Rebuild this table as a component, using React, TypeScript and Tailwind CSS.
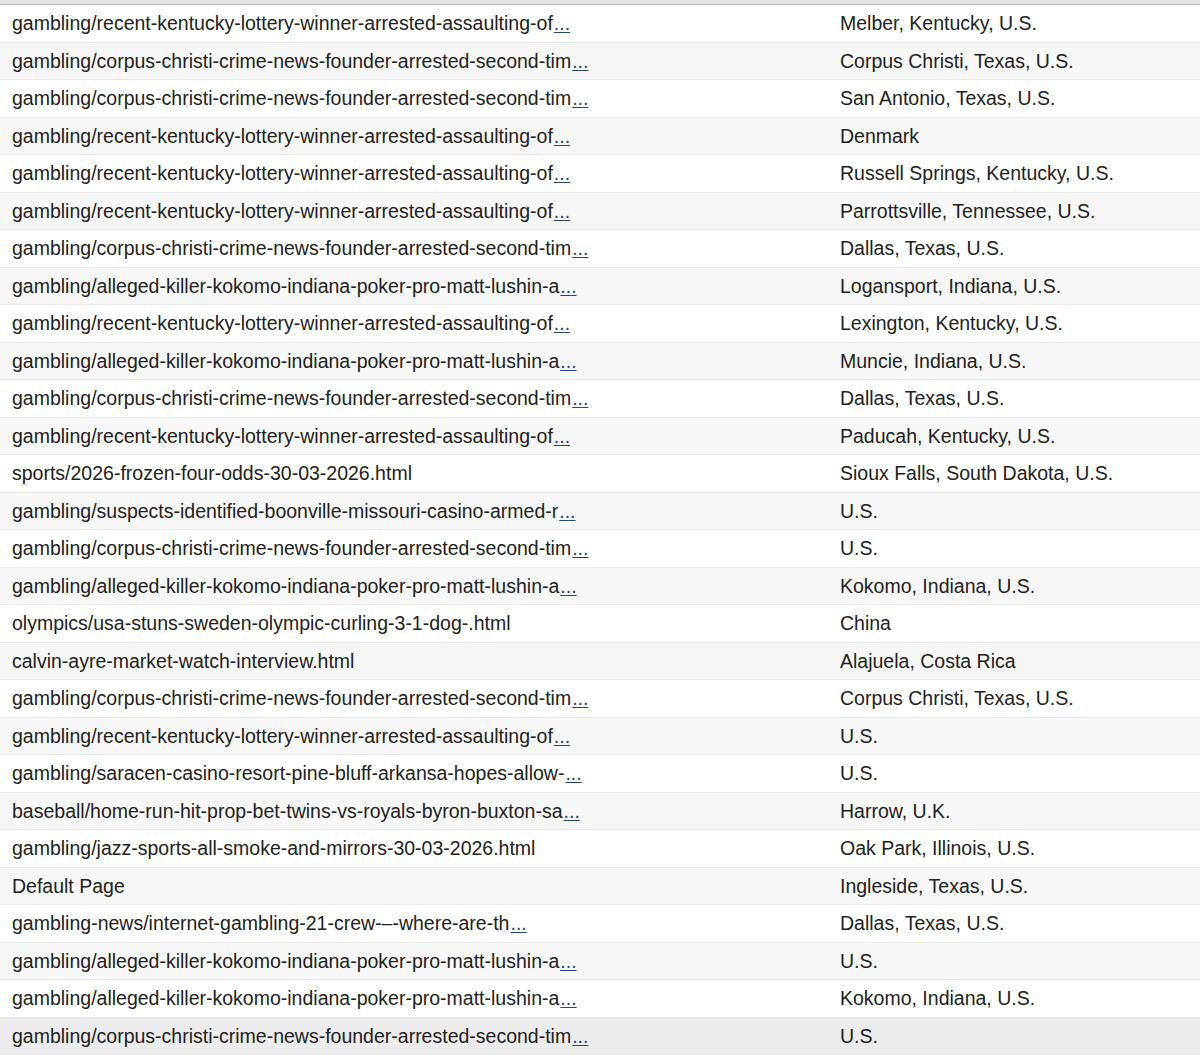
const rows: [string, boolean, string][] = [
  ["gambling/recent-kentucky-lottery-winner-arrested-assaulting-of", true, "Melber, Kentucky, U.S."],
  ["gambling/corpus-christi-crime-news-founder-arrested-second-tim", true, "Corpus Christi, Texas, U.S."],
  ["gambling/corpus-christi-crime-news-founder-arrested-second-tim", true, "San Antonio, Texas, U.S."],
  ["gambling/recent-kentucky-lottery-winner-arrested-assaulting-of", true, "Denmark"],
  ["gambling/recent-kentucky-lottery-winner-arrested-assaulting-of", true, "Russell Springs, Kentucky, U.S."],
  ["gambling/recent-kentucky-lottery-winner-arrested-assaulting-of", true, "Parrottsville, Tennessee, U.S."],
  ["gambling/corpus-christi-crime-news-founder-arrested-second-tim", true, "Dallas, Texas, U.S."],
  ["gambling/alleged-killer-kokomo-indiana-poker-pro-matt-lushin-a", true, "Logansport, Indiana, U.S."],
  ["gambling/recent-kentucky-lottery-winner-arrested-assaulting-of", true, "Lexington, Kentucky, U.S."],
  ["gambling/alleged-killer-kokomo-indiana-poker-pro-matt-lushin-a", true, "Muncie, Indiana, U.S."],
  ["gambling/corpus-christi-crime-news-founder-arrested-second-tim", true, "Dallas, Texas, U.S."],
  ["gambling/recent-kentucky-lottery-winner-arrested-assaulting-of", true, "Paducah, Kentucky, U.S."],
  ["sports/2026-frozen-four-odds-30-03-2026.html", false, "Sioux Falls, South Dakota, U.S."],
  ["gambling/suspects-identified-boonville-missouri-casino-armed-r", true, "U.S."],
  ["gambling/corpus-christi-crime-news-founder-arrested-second-tim", true, "U.S."],
  ["gambling/alleged-killer-kokomo-indiana-poker-pro-matt-lushin-a", true, "Kokomo, Indiana, U.S."],
  ["olympics/usa-stuns-sweden-olympic-curling-3-1-dog-.html", false, "China"],
  ["calvin-ayre-market-watch-interview.html", false, "Alajuela, Costa Rica"],
  ["gambling/corpus-christi-crime-news-founder-arrested-second-tim", true, "Corpus Christi, Texas, U.S."],
  ["gambling/recent-kentucky-lottery-winner-arrested-assaulting-of", true, "U.S."],
  ["gambling/saracen-casino-resort-pine-bluff-arkansa-hopes-allow-", true, "U.S."],
  ["baseball/home-run-hit-prop-bet-twins-vs-royals-byron-buxton-sa", true, "Harrow, U.K."],
  ["gambling/jazz-sports-all-smoke-and-mirrors-30-03-2026.html", false, "Oak Park, Illinois, U.S."],
  ["Default Page", false, "Ingleside, Texas, U.S."],
  ["gambling-news/internet-gambling-21-crew-\u2013-where-are-th", true, "Dallas, Texas, U.S."],
  ["gambling/alleged-killer-kokomo-indiana-poker-pro-matt-lushin-a", true, "U.S."],
  ["gambling/alleged-killer-kokomo-indiana-poker-pro-matt-lushin-a", true, "Kokomo, Indiana, U.S."],
  ["gambling/corpus-christi-crime-news-founder-arrested-second-tim", true, "U.S."],
];

export default function App() {
  return (
    <div className="min-h-screen bg-white font-['Liberation_Sans',Arial,sans-serif] text-[19.5px] text-[#222]">
      {/* top edge of the scrolled table */}
      <div className="h-[5px] bg-[#e3e3e3] border-b border-[#b8b8b8]" />
      <div>
        {rows.map(([page, cut, location], i) => {
          const last = i === rows.length - 1;
          const bg = last ? "bg-[#ececec] border-t border-[#dcdcdc]" : i % 2 ? "bg-[#f7f7f7]" : "bg-white";
          return (
            <div key={i} className={`flex items-center h-[37.5px] pt-[1px] border-b border-[#e9e9e9] ${bg}`}>
              <div className="w-[840px] pl-[12px] whitespace-nowrap">
                {page}
                {cut && <span className="ml-[1px] text-[#23447f] underline underline-offset-2">...</span>}
              </div>
              <div className="flex-1 whitespace-nowrap">{location}</div>
            </div>
          );
        })}
      </div>
    </div>
  );
}
